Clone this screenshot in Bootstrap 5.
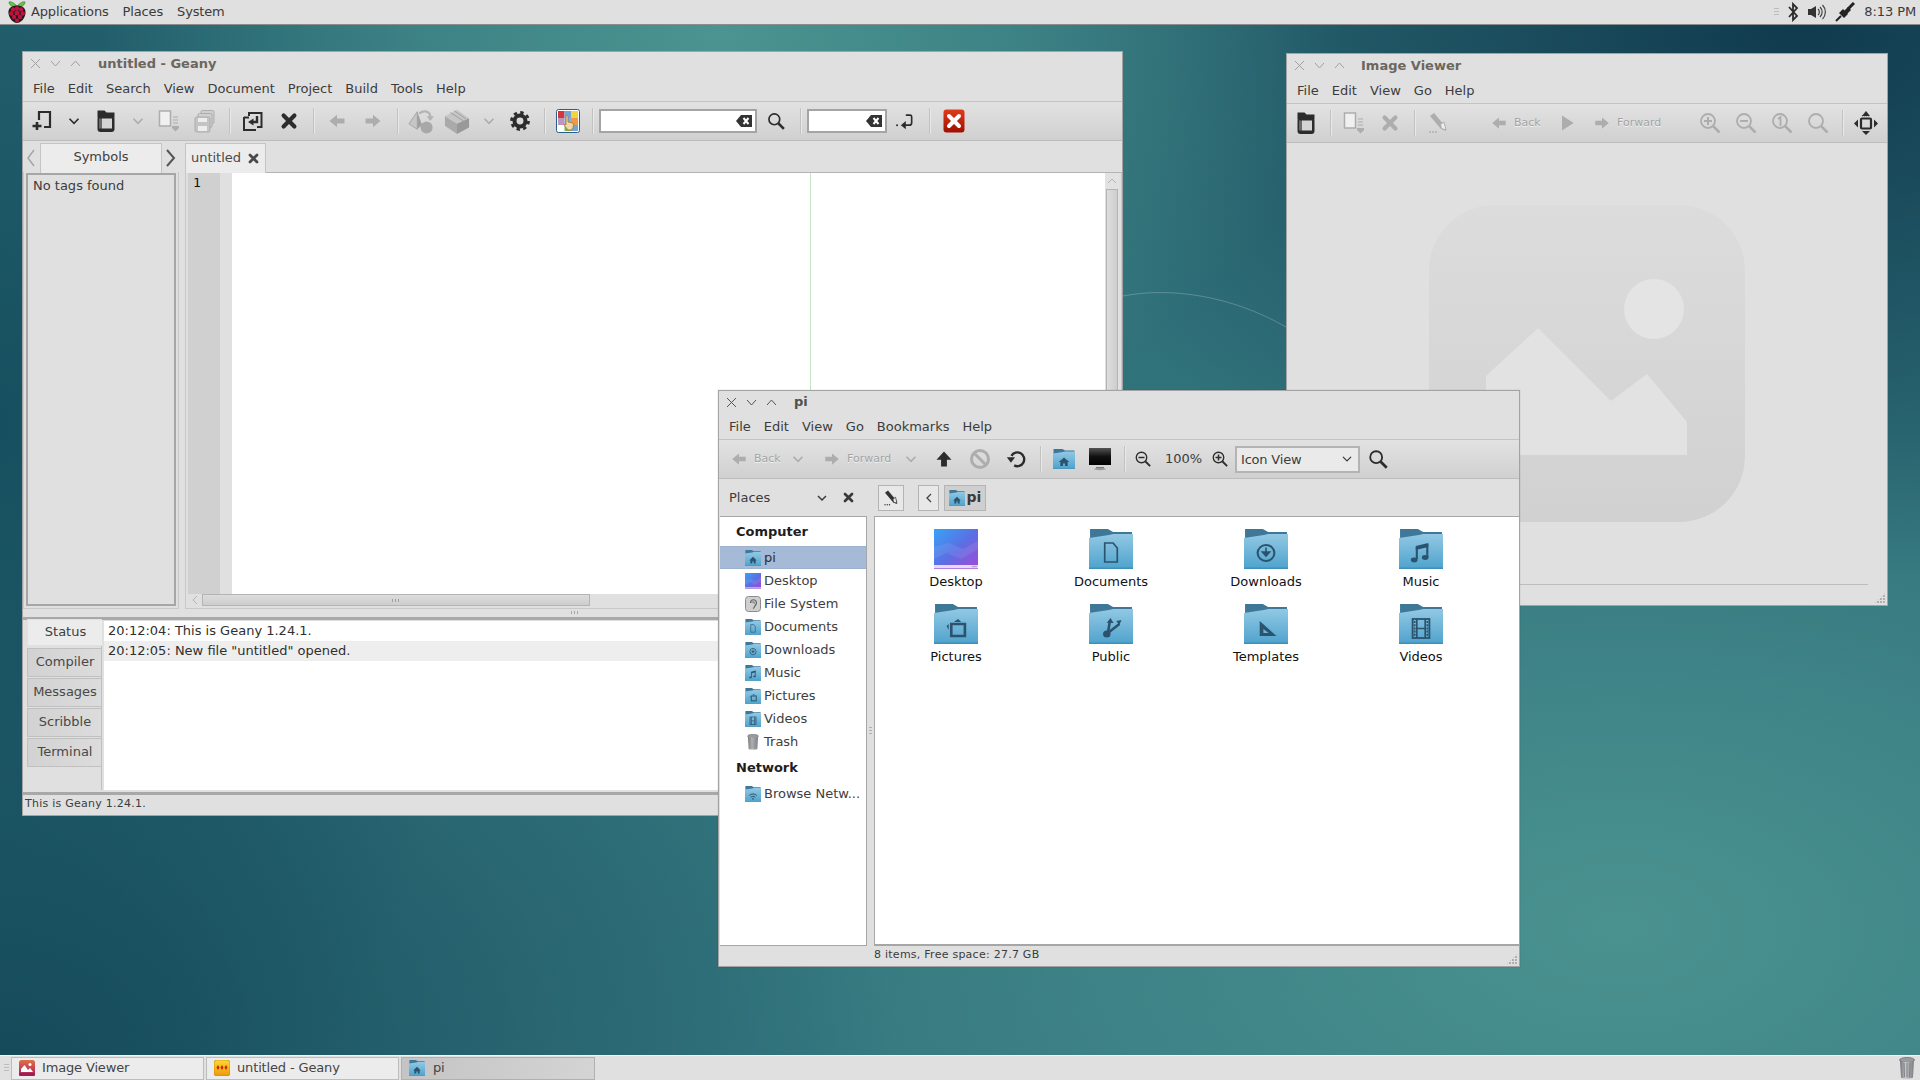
<!DOCTYPE html>
<html lang="en">
<head>
<meta charset="UTF-8">
<title>Desktop</title>
<link href="https://cdn.jsdelivr.net/npm/bootstrap@5.3.0/dist/css/bootstrap.min.css" rel="stylesheet">
<style>
body{width:1920px;height:1080px;overflow:hidden;font:13px/1.2 "DejaVu Sans",sans-serif;color:#3a3a3a;background:#2b6c76}
svg{display:block;flex:none}
.toppanel{height:25px;background:#e0e0e0;border-bottom:1px solid #8c8c8c;padding-left:7px}
.toppanel .logo{margin-right:4px}
.panelmenu{gap:14px;letter-spacing:-.15px}
.clock{margin:0 4px 0 9px;letter-spacing:-.1px}
.desk{position:relative;height:1030px;overflow:hidden;background:
 radial-gradient(ellipse 620px 420px at 720px 10px,#4b9491 0%,rgba(75,148,145,0) 100%),
 radial-gradient(ellipse 800px 560px at 1800px 0,#103a4e 0%,rgba(16,58,78,0) 100%),
 radial-gradient(ellipse 900px 560px at 0 1030px,#154a5b 0%,rgba(21,74,91,0) 100%),
 radial-gradient(ellipse 480px 900px at 0 400px,#164f5f 0%,rgba(22,79,95,0) 100%),
 radial-gradient(ellipse 900px 520px at 1620px 900px,#4a9290 0%,rgba(74,146,144,0) 100%),
 linear-gradient(#2e6f78,#357880)}
.arc{position:absolute;left:1100px;top:240px}
.win{position:absolute;background:#e0e0e0;border:1px solid #a3a3a3;display:flex;flex-direction:column}
.win-geany{left:22px;top:26px;width:1101px;height:765px}
.win-viewer{left:1286px;top:28px;width:602px;height:553px}
.win-files{left:718px;top:365px;width:802px;height:577px;box-shadow:0 0 0 1px rgba(0,0,0,.04)}
.titlerow{height:24px;padding:0 0 1px 2px;color:#6b675f;font-weight:700;flex:none}
.win-files .titlerow{color:#50504c;height:23px}
.wctl{width:20px;display:flex;justify-content:center;color:#a0a0a0}
.win-files .wctl{color:#555}
.titletext{margin-left:13px}
.win-viewer .titletext{margin-left:12px}
.menurow{height:26px;flex:none;padding:0 0 0 10px;gap:13px;border-bottom:1px solid #c4c4c4;color:#3c3c3c}
.toolrow{height:39px;flex:none;background:linear-gradient(#e2e2e2,#d0d0d0);border-bottom:1px solid #bcbcbc;padding-left:1px}
.tool{width:36px;height:36px;display:flex;align-items:center;justify-content:center;flex:none;color:#2c2c2c}
.tool.chev{width:27px}
.tool.chev.first{width:28px}
.tool.chev-sm{width:24px}
.tool.narrow{width:26px}
.tool.wide{width:37px}
.dim{color:#adadad}
.tsep{width:12px;height:26px;flex:none;display:flex;justify-content:center}
.tsep.plus{width:13px}
.tsep::before{content:"";width:1px;height:100%;background:#c2c2c2;box-shadow:1px 0 0 #e8e8e8}
.entry.form-control{width:158px;height:24px;min-height:0;margin-left:1px;padding:0;border:2px solid #a4a4a4;border-radius:0;background:#fff;flex:none}
.entrywrap{position:relative;flex:none}
.entrywrap .clear{position:absolute;right:5px;top:5px}
.w-entry2.form-control{width:80px}
.tlabel{font-size:11px;color:#a4a4a4;text-shadow:0 1px 0 #f2f2f2}
.tgroup{flex:none;gap:6px}
.tback{width:51px}
.tfwd{width:71px}
.gl-3{margin-left:3px}
.gl-5{margin-left:5px}
.gl-8{margin-left:8px}
.gl-10{margin-left:10px}
.gl-13{margin-left:13px}
.gl-28{margin-left:28px}
.gl-34{margin-left:34px}
.work{height:468px;flex:none}
.sidebook{width:158px;flex:none}
.strip{height:31px;flex:none;position:relative}
.tabhead{position:absolute;top:2px;height:30px;background:#ececec;border:1px solid #c4c4c4;border-bottom:none;display:flex;align-items:center;justify-content:center;color:#404040}
.tab-symbols{left:17px;width:122px;padding-bottom:4px}
.tab-untitled{left:0;width:81px;top:2px;height:30px;gap:6px;z-index:1;color:#4a4a4a;padding-bottom:1px}
.arrow-l{position:absolute;left:3px;top:7px;color:#a6a6a6}
.arrow-r{position:absolute;left:142px;top:7px;color:#555}
.sideframe{width:156px;height:437px;border:1px solid #c8c8c8;border-top:none;padding:1px 2px 2px}
.tagbox{height:100%;border:2px solid #a6a6a6;padding:3px 5px;color:#3c3c3c}
.vhandle{width:4px;flex:none;position:relative}
.editbook{width:937px;flex:none}
.editstrip{height:32px;position:relative;border-bottom:1px solid #b4b4b4}
.editframe{height:436px;border:1px solid #c8c8c8;border-top:none;padding:0 2px 2px 2px;display:flex;flex-direction:column}
.editmain{flex:1;min-height:0}
.gutter{width:32px;background:#d0d0d0;font:13px/17px "DejaVu Sans Mono",monospace;color:#111;padding:1px 0 0 5px;flex:none}
.fold{width:12px;background:#e0e0e0;flex:none}
.paper{flex:1;background:#fff;position:relative}
.paper::after{content:"";position:absolute;left:578px;top:0;bottom:0;width:1px;background:#c6e4c4}
.vbar{width:14px;flex:none;background:#e2e2e2;padding:0 1px}
.vbar .step{height:16px;display:flex;justify-content:center;align-items:center;color:#b4b4b4}
.vbar .thumb{height:388px;background:linear-gradient(90deg,#dedede,#cecece);border:1px solid #b4b4b4}
.hbar{height:12px;flex:none}
.hmargin{width:14px;flex:none;display:flex;align-items:center;padding-left:3px;color:#b4b4b4}
.hthumb{width:388px;height:12px;background:linear-gradient(#dcdcdc,#cecece);border:1px solid #b4b4b4;display:flex;align-items:center;justify-content:center}
.grip{width:8px;height:3px;background:repeating-linear-gradient(90deg,#a0a0a0 0 1px,transparent 1px 3px)}
.split{height:8px;flex:none;position:relative}
.split::after{content:"";position:absolute;left:548px;top:2px;width:8px;height:3px;background:repeating-linear-gradient(90deg,#a8a8a8 0 1px,transparent 1px 3px)}
.msgwin{height:178px;flex:none;border-top:3px solid #a8a8a8;border-bottom:3px solid #a8a8a8;padding-bottom:2px}
.msgtabs{width:79px;flex:none;padding-left:4px;border-right:1px solid #c0c0c0;position:relative}
.msgtab{height:29px;margin-bottom:1px;width:74px;padding:0 0 1px 1px;background:linear-gradient(90deg,#d2d2d2,#dcdcdc);border:1px solid #c0c0c0;border-right:none;display:flex;align-items:center;justify-content:center;color:#484848}
.msgtab.act{background:#ececec;width:75px;height:27px;margin:-1px 0 2px;position:relative;border-color:#e0e0e0;color:#404040}
.msgbody{margin-left:2px;flex:1;background:#fff;margin-top:1px}
.msgline{height:20px;padding-left:4px;display:flex;align-items:center;color:#303030}
.msgline.alt{background:#eeeeee}
.statusrow{height:20px;flex:none;padding:0 0 2px 2px;font-size:11px;color:#3c3c3c;letter-spacing:.25px}
.viewpane{flex:1;min-height:0}
.viewstat{height:21px;flex:none;position:relative}
.viewstat::before{content:"";position:absolute;left:0;right:19px;top:0;height:1px;background:#bcbcbc}
.grippy{position:absolute;right:1px;bottom:1px;width:12px;height:12px;background-image:radial-gradient(circle at 1px 1px,#b0b0b0 1px,transparent 1px);background-size:3px 3px;clip-path:polygon(100% 0,100% 100%,0 100%)}
.placerow{height:37px;flex:none;padding-left:10px}
.placename{width:80px;color:#3c3c3c}
.pathbtn.btn{height:26px;width:26px;padding:0;display:flex;align-items:center;justify-content:center;background:#e8e8e8;border:1px solid #b4b4b4;border-radius:0;color:#333;flex:none}
.pathbtn.back{width:21px;margin-left:14px}
.pathbtn.here{width:42px;margin-left:5px;background:#cfcfcf;gap:2px;font-weight:700;color:#3a3a3a;font-size:14px}
.tplaces{width:26px;display:flex;justify-content:center;flex:none}
.m-edit{margin-left:17px}
.fileswork{flex:1;min-height:0}
.sidepane{width:147px;flex:none;background:#fff;border:1px solid #a6a6a6;border-left:none;margin-left:1px}
.sidehead{height:26px;padding-left:16px;font-weight:700;color:#1e1e1e;display:flex;align-items:center}
.sidehead.first{height:29px}
.sidehead.net{height:29px}
.siderow{height:23px;padding-left:25px;gap:3px;color:#404040}
.siderow.sel{background:#a5bad6;border-top:1px solid #9cb2cf;border-bottom:1px solid #9cb2cf;color:#2c2c2c}
.midhandle{width:7px;flex:none;display:flex;align-items:center;justify-content:center}
.midgrip{width:3px;height:8px;background:repeating-linear-gradient(#b0b0b0 0 1px,transparent 1px 3px)}
.mainpane{flex:1;background:#fff;border-top:1px solid #a6a6a6;border-left:1px solid #a6a6a6;border-bottom:2px solid #a6a6a6;padding:12px 0 0 3.5px;display:grid;grid-template-columns:repeat(4,155px);grid-auto-rows:75px;align-content:start;color:#111}
.ficon{display:flex;flex-direction:column;align-items:center}
.ficon span{margin-top:5px;line-height:16px}
.filestat{height:20px;flex:none;position:relative;padding:0 0 2px 155px;font-size:11px;color:#3c3c3c;letter-spacing:.25px}
.viewselect.form-select{width:125px;height:27px;min-height:0;font:13px "DejaVu Sans",sans-serif;letter-spacing:-.2px;padding:0 0 0 4px;margin-left:2px;background-color:#eaeaea;background-position:right 5px center;background-size:12px 10px;border:2px solid #b4b4b4;border-radius:0;color:#3c3c3c;flex:none}
.pct{width:34px;margin:0 8px 0 9px;color:#3c3c3c;flex:none}
.taskbar{height:25px;background:#e0e0e0;border-top:1px solid #f4f4f4;padding:1px 5px 1px 4px}
.taskgrip{width:5px;height:9px;margin-right:2px;background:repeating-linear-gradient(#bcbcbc 0 1px,transparent 1px 3px)}
.taskbtn.btn{width:193px;height:23px;padding:0 0 0 7px;margin-right:2px;font-size:13px;letter-spacing:-.15px;gap:7px;background:#ececec;border:1px solid #bdbdbd;border-radius:0;color:#444;display:flex;align-items:center;text-align:left}
.taskbtn.on{background:linear-gradient(90deg,#c4c4c4,#d4d4d4);border-color:#b0b0b0;margin-right:0;width:194px;gap:8px}
</style>
</head>
<body>
<svg width="0" height="0" class="position-absolute">
 <defs>
  <linearGradient id="gFolder" x1="0" y1="0" x2="0" y2="1"><stop offset="0" stop-color="#92c8e4"/><stop offset="1" stop-color="#4fa3cd"/></linearGradient>
  <linearGradient id="gDesk" x1="0" y1="0" x2="1" y2="1"><stop offset="0" stop-color="#36a4f6"/><stop offset=".5" stop-color="#5a70e4"/><stop offset="1" stop-color="#a447d6"/></linearGradient>
  <linearGradient id="gMon" x1="0" y1="0" x2="0" y2="1"><stop offset="0" stop-color="#555"/><stop offset=".5" stop-color="#111"/><stop offset="1" stop-color="#000"/></linearGradient>
  <linearGradient id="gRed" x1="0" y1="0" x2="0" y2="1"><stop offset="0" stop-color="#e23a1c"/><stop offset="1" stop-color="#9e0f00"/></linearGradient>
  <linearGradient id="gImg" x1="0" y1="0" x2="0" y2="1"><stop offset="0" stop-color="#e0704a"/><stop offset="1" stop-color="#a81f5c"/></linearGradient>
  <linearGradient id="gGeany" x1="0" y1="0" x2="0" y2="1"><stop offset="0" stop-color="#ffd92c"/><stop offset="1" stop-color="#eb9a0c"/></linearGradient>
  <linearGradient id="gTrash" x1="0" y1="0" x2="1" y2="0"><stop offset="0" stop-color="#6f7275"/><stop offset=".4" stop-color="#c4c6c8"/><stop offset="1" stop-color="#7a7c80"/></linearGradient>
  <linearGradient id="gPh" x1="0" y1="0" x2="0" y2="1"><stop offset="0" stop-color="#dcdcdc"/><stop offset="1" stop-color="#d1d1d1"/></linearGradient>

  <symbol id="folder" viewBox="0 0 42 40" preserveAspectRatio="none">
   <path d="M1 0h17l5 3h18v9H1z" fill="#3f7799"/>
   <path d="M0 9l19-3 4-1h19v34.500H0z" fill="url(#gFolder)"/>
   <path d="M0 38.500h42V40H0z" fill="#3f8fbb"/>
  </symbol>
  <symbol id="f-doc" viewBox="0 0 42 40" preserveAspectRatio="none"><use href="#folder"/><path d="M15 14h8l4 5v14H15z" fill="none" stroke="#2c536d" stroke-width="1.600"/></symbol>
  <symbol id="f-down" viewBox="0 0 42 40" preserveAspectRatio="none"><use href="#folder"/><circle cx="21" cy="24" r="8" fill="none" stroke="#2c536d" stroke-width="2"/><path d="M21 18.500v7M17.500 23l3.500 4 3.500-4z" fill="#2c536d" stroke="#2c536d" stroke-width="1.500"/></symbol>
  <symbol id="f-music" viewBox="0 0 42 40" preserveAspectRatio="none"><use href="#folder"/><path d="M27 15v13" fill="none" stroke="#2c536d" stroke-width="2"/><path d="M17 18v12" stroke="#2c536d" stroke-width="2"/><ellipse cx="14.500" cy="31" rx="3.200" ry="2.400" fill="#2c536d"/><ellipse cx="25" cy="28.500" rx="3.200" ry="2.400" fill="#2c536d"/><path d="M16 17l12-3v4l-12 3z" fill="#2c536d"/></symbol>
  <symbol id="f-pic" viewBox="0 0 42 40" preserveAspectRatio="none"><use href="#folder"/><rect x="16.500" y="20" width="13" height="12" fill="none" stroke="#2c536d" stroke-width="2.500"/><path d="M19 18l4-3 3 3zM12 22l2-2v6z" fill="#2c536d"/></symbol>
  <symbol id="f-pub" viewBox="0 0 42 40" preserveAspectRatio="none"><use href="#folder"/><circle cx="17" cy="30" r="3.600" fill="#2c536d"/><path d="M18 29l2-12M18 29l11-9" stroke="#2c536d" stroke-width="2.400"/><path d="M17 19l3.500-5 3 5zM26 17l5-1-2 5z" fill="#2c536d"/></symbol>
  <symbol id="f-tpl" viewBox="0 0 42 40" preserveAspectRatio="none"><use href="#folder"/><path d="M15 17v15h16z" fill="#2c536d"/><path d="M18.500 25v4h5z" fill="#6fb3d6"/></symbol>
  <symbol id="f-vid" viewBox="0 0 42 40" preserveAspectRatio="none"><use href="#folder"/><rect x="13" y="15" width="16" height="19" fill="none" stroke="#2c536d" stroke-width="1.800"/><path d="M17 15v19M25 15v19M17 24.500h8" stroke="#2c536d" stroke-width="1.600"/><path d="M15 17v15M27 17v15" stroke="#2c536d" stroke-width="1.600" stroke-dasharray="2 1.200"/></symbol>
  <symbol id="f-home" viewBox="0 0 42 40" preserveAspectRatio="none"><use href="#folder"/><path d="M21 17l10 9h-3v8h-5v-5h-4v5h-5v-8h-3z" fill="#2c536d"/></symbol>
  <symbol id="f-net" viewBox="0 0 42 40" preserveAspectRatio="none"><use href="#folder"/><path d="M11 24a14 14 0 0 1 20 0M15 28a9 9 0 0 1 12 0" fill="none" stroke="#2c536d" stroke-width="2.500"/><circle cx="21" cy="32" r="2.200" fill="#2c536d"/></symbol>
  <symbol id="deskicon" viewBox="0 0 42 40" preserveAspectRatio="none">
   <rect width="42" height="40" fill="url(#gDesk)"/>
   <path d="M0 18l14-4 14 6 14-8v8L26 30 12 24 0 30z" fill="#fff" opacity=".08"/>
   <rect y="36" width="42" height="3" fill="#ead8f6"/><rect x="36" y="36.800" width="5" height="1.500" fill="#b9a6c8"/><rect y="39" width="42" height="1" fill="#b07ee0"/>
  </symbol>
  <symbol id="fsicon" viewBox="0 0 16 16"><rect x=".5" y=".5" width="15" height="15" rx="3" fill="#cfcfcf" stroke="#8c8c8c"/><path d="M5.500 7a3 3 0 1 1 5 2c-1 1-1 3-2.500 3.500" fill="none" stroke="#666" stroke-width="1.200"/><path d="M7 7a1.200 1.200 0 1 1 2 .8" fill="none" stroke="#666"/></symbol>
  <symbol id="trash" viewBox="0 0 16 22"><ellipse cx="8" cy="3" rx="7.500" ry="2.500" fill="#9a9da0" stroke="#6f7275" stroke-width=".8"/><path d="M1 3.500l1 17c1 1.500 11 1.500 12 0l1-17c-2 2-12 2-14 0z" fill="url(#gTrash)"/><path d="M5 6l.5 14M11 6l-.5 14M8 6v14" stroke="#77797c" stroke-width=".8"/></symbol>

  <symbol id="i-new" viewBox="0 0 24 24"><path d="M9 11V3h11v15h-6" fill="none" stroke="currentColor" stroke-width="2.200"/><path d="M7 13v8M2.500 17h9" stroke="currentColor" stroke-width="2.600"/></symbol>
  <symbol id="i-open" viewBox="0 0 24 24"><path d="M3.500 1.500h7l2 2h8v5h-17z" fill="currentColor"/><rect x="3.500" y="7" width="17" height="16" rx="3" fill="currentColor"/><rect x="8" y="9.500" width="10" height="10" fill="#d4d4d4"/><rect x="5" y="9.500" width="3" height="10" fill="#6a6a6a"/></symbol>
  <symbol id="i-saveas" viewBox="0 0 24 24"><rect x="2.500" y="2" width="11" height="15" fill="#f0f0f0" stroke="currentColor" stroke-width="1.500"/><path d="M16 8h5M16 11h5M16 14h5" stroke="currentColor"/><path d="M15 17h7v2l-3.500 3.500L15 19z" fill="currentColor"/></symbol>
  <symbol id="i-saveall" viewBox="0 0 24 24"><rect x="8" y="1.500" width="13" height="13" rx="1.500" fill="#cfcfcf" stroke="currentColor"/><rect x="5" y="4.500" width="14" height="14" rx="1.500" fill="#cfcfcf" stroke="currentColor"/><rect x="2" y="8" width="15" height="15" rx="1.500" fill="#c4c4c4" stroke="currentColor"/><rect x="5" y="17" width="9" height="5" fill="#ededed"/><rect x="5" y="9" width="9" height="4" fill="#ededed"/></symbol>
  <symbol id="i-reload" viewBox="0 0 24 24"><path d="M8 7V4h12.500v14H16" fill="none" stroke="currentColor" stroke-width="2"/><path d="M3 8.500h5M3 8v13h12" fill="none" stroke="currentColor" stroke-width="2"/><path d="M16 7v6h-5" fill="none" stroke="currentColor" stroke-width="2.400"/><path d="M12.500 9.500L7 13l5.500 3.500z" fill="currentColor"/></symbol>
  <symbol id="i-x" viewBox="0 0 24 24"><path d="M5.500 5.500l13 13M18.500 5.500l-13 13" stroke="currentColor" stroke-width="5" stroke-linecap="round"/></symbol>
  <symbol id="i-left" viewBox="0 0 24 24"><path d="M3 12l9-7.500V9h9v6h-9v4.500z" fill="currentColor"/></symbol>
  <symbol id="i-right" viewBox="0 0 24 24"><path d="M21 12l-9-7.500V9H3v6h9v4.500z" fill="currentColor"/></symbol>
  <symbol id="i-up" viewBox="0 0 24 24"><path d="M12 3l9 10h-5.500v8h-7v-8H3z" fill="currentColor"/></symbol>
  <symbol id="i-play" viewBox="0 0 24 24"><path d="M6 3l14 9-14 9z" fill="currentColor"/></symbol>
  <symbol id="i-chev" viewBox="0 0 24 24"><path d="M6 9l6 6 6-6" fill="none" stroke="currentColor" stroke-width="2.200"/></symbol>
  <symbol id="i-compile" viewBox="0 0 28 28"><path d="M10 4L1 17l9 6z" fill="#c6c6c6" stroke="#a4a4a4"/><path d="M10 4l5 14-5 5z" fill="#9e9e9e"/><circle cx="20" cy="21" r="6.500" fill="#a8a8a8"/><path d="M12 6c5-4 12-3 12 4" fill="none" stroke="#b4b4b4" stroke-width="2.400"/><path d="M20 9l4 5 4-5z" fill="#b4b4b4"/></symbol>
  <symbol id="i-brick" viewBox="0 0 28 28"><path d="M1 9l13-7 13 9-13 6z" fill="#c6c6c6"/><path d="M1 9v10l13 9V17z" fill="#aaa"/><path d="M14 17v11l13-7V11z" fill="#999"/><path d="M7 5l14 9M11 3l13 9" stroke="#9a9a9a"/></symbol>
  <symbol id="i-gear" viewBox="0 0 24 24"><circle cx="12" cy="12" r="6" fill="none" stroke="currentColor" stroke-width="4.400"/><circle cx="12" cy="12" r="9.300" fill="none" stroke="currentColor" stroke-width="3" stroke-dasharray="3.700 3.600"/></symbol>
  <symbol id="i-color" viewBox="0 0 24 24"><rect x=".5" y=".5" width="23" height="23" rx="2" fill="#fff" stroke="#2a5d8f"/><rect x="2" y="2" width="6.500" height="7" fill="#d8343c"/><rect x="8.500" y="2" width="6.500" height="7" fill="#6fa6d8"/><rect x="15" y="2" width="7" height="7" fill="#f2d340"/><rect x="2" y="9" width="6.500" height="7" fill="#bd97bd"/><rect x="8.500" y="9" width="6.500" height="7" fill="#7fb0d8"/><rect x="15" y="9" width="7" height="7" fill="#ee9a44"/><rect x="8.500" y="16" width="6.500" height="6" fill="#74b848"/><rect x="15" y="16" width="7" height="6" fill="#6fa6d8"/><path d="M10 8c0-2 2-2 2 0v5l5 1c1 3 0 6-2 7h-3l-4-5c0-1 1-1 2 0z" fill="#f2d6a8" stroke="#a8692a" stroke-width=".7"/></symbol>
  <symbol id="i-clear" viewBox="0 0 16 14"><path d="M0 7l5-6h11v12H5z" fill="#333"/><path d="M7.500 4l5 6M12.500 4l-5 6" stroke="#fff" stroke-width="2"/></symbol>
  <symbol id="i-find" viewBox="0 0 24 24"><circle cx="10" cy="10" r="6.500" fill="none" stroke="currentColor" stroke-width="2"/><path d="M15 15l6.500 6.500" stroke="currentColor" stroke-width="3"/></symbol>
  <symbol id="i-jump" viewBox="0 0 24 24"><path d="M13 5h5c2 0 2 1 2 3v6c0 2-1 3-3 3h-5" fill="none" stroke="currentColor" stroke-width="2"/><path d="M13 12l-6 5 6 5z" fill="currentColor"/><circle cx="2.500" cy="17" r="1.200" fill="currentColor"/></symbol>
  <symbol id="i-redx" viewBox="0 0 22 24"><rect x=".5" y=".5" width="21" height="23" rx="3" fill="url(#gRed)"/><path d="M6 7l10 10M16 7L6 17" stroke="#fff" stroke-width="4" stroke-linecap="round"/></symbol>
  <symbol id="i-pencil" viewBox="0 0 24 24"><path d="M4 5l4-3 11 13 1 5-5-2z" fill="currentColor"/><path d="M14.500 13.500l3.500-2.500 2 8-4.500-1.500z" fill="#eee" stroke="currentColor"/><circle cx="4" cy="21" r=".9" fill="currentColor"/><circle cx="7" cy="21" r=".9" fill="currentColor"/><circle cx="10" cy="21" r=".9" fill="currentColor"/></symbol>
  <symbol id="i-zin" viewBox="0 0 24 24"><circle cx="10" cy="10" r="7" fill="none" stroke="currentColor" stroke-width="1.800"/><path d="M6 10h8M10 6v8" stroke="currentColor" stroke-width="2"/><path d="M15 15l6.500 6.500" stroke="currentColor" stroke-width="2.500"/></symbol>
  <symbol id="i-zout" viewBox="0 0 24 24"><circle cx="10" cy="10" r="7" fill="none" stroke="currentColor" stroke-width="1.800"/><path d="M6 10h8" stroke="currentColor" stroke-width="2"/><path d="M15 15l6.500 6.500" stroke="currentColor" stroke-width="2.500"/></symbol>
  <symbol id="i-z1" viewBox="0 0 24 24"><circle cx="10" cy="10" r="7" fill="none" stroke="currentColor" stroke-width="1.800"/><path d="M8 8l2.500-2v9" fill="none" stroke="currentColor" stroke-width="1.800"/><path d="M15 15l6.500 6.500" stroke="currentColor" stroke-width="2.500"/></symbol>
  <symbol id="i-zfit" viewBox="0 0 24 24"><circle cx="10" cy="10" r="7" fill="none" stroke="currentColor" stroke-width="1.800"/><path d="M15 15l6.500 6.500" stroke="currentColor" stroke-width="2.500"/></symbol>
  <symbol id="i-full" viewBox="0 0 24 24"><rect x="7" y="7.500" width="10" height="10" rx="1" fill="none" stroke="currentColor" stroke-width="2.200"/><path d="M12 0l4 5H8zM12 24l-4-4h8zM0 12.500l4-4v8zM24 12.500l-4-4v8z" fill="currentColor"/><path d="M8 4.800h8" stroke="currentColor" stroke-dasharray="1 1"/></symbol>
  <symbol id="i-stop" viewBox="0 0 24 24"><circle cx="12" cy="12" r="8.500" fill="none" stroke="currentColor" stroke-width="3"/><path d="M6.500 6.500l11 11" stroke="currentColor" stroke-width="3"/></symbol>
  <symbol id="i-undo" viewBox="0 0 24 24"><path d="M7 8.500a7.500 7.500 0 1 1 3 10.500" fill="none" stroke="currentColor" stroke-width="2.600"/><path d="M2 10h9l-4.500 6z" fill="currentColor"/></symbol>
  <symbol id="i-mon" viewBox="0 0 24 24"><rect x="1" y="1" width="22" height="17" fill="url(#gMon)"/><path d="M8 20h8v1H8z" fill="#777"/><ellipse cx="12" cy="22" rx="6" ry="1.200" fill="#999"/></symbol>
  <symbol id="i-bt" viewBox="0 0 12 20"><path d="M2 5l8 9-4 4V2l4 4-8 9" fill="none" stroke="#2c2c2c" stroke-width="1.800"/></symbol>
  <symbol id="i-vol" viewBox="0 0 20 20"><path d="M1 7h3l5-3v12l-5-3H1z" fill="#333"/><path d="M11 7a4 4 0 0 1 0 6M13 5a7 7 0 0 1 0 10M15.500 3a10 10 0 0 1 0 14" fill="none" stroke="#444" stroke-width="1.200"/></symbol>
  <symbol id="i-cable" viewBox="0 0 20 20"><path d="M1 19l5-5" stroke="#222" stroke-width="2"/><path d="M4 11l5 5 4-4-5-5z" fill="#222"/><path d="M9 9l4-4 3 3-4 4z" fill="#222"/><path d="M13 7l6-6" stroke="#222" stroke-width="3"/></symbol>
  <symbol id="i-rasp" viewBox="0 0 20 24">
   <path d="M10 6C7 3 4 1 2 2c0 3 3 5 7 5zM10 6c3-3 6-5 8-4 0 3-3 5-7 5z" fill="#6cc04a" stroke="#2f7a22" stroke-width=".6"/>
   <path d="M10 5.500c-7 0-9 4-8.500 8 .5 5 5 9.500 8.500 9.500s8-4.500 8.500-9.500c.5-4-1.500-8-8.500-8z" fill="#1d1d1d"/>
   <g fill="#c0123f"><circle cx="6" cy="9.500" r="2.200"/><circle cx="10" cy="8.500" r="2.200"/><circle cx="14" cy="9.500" r="2.200"/><circle cx="4.300" cy="13.500" r="2.200"/><circle cx="10" cy="13" r="2.500"/><circle cx="15.700" cy="13.500" r="2.200"/><circle cx="7" cy="17" r="2.200"/><circle cx="13" cy="17" r="2.200"/><circle cx="10" cy="20.500" r="2"/></g>
  </symbol>
  <symbol id="i-imgapp" viewBox="0 0 16 16"><rect width="16" height="16" rx="2.500" fill="url(#gImg)"/><path d="M2 12V9l3.500-4L9 10l2-2 3 4z" fill="#fff"/><circle cx="11" cy="4.500" r="1.500" fill="#fff"/><rect y="13" width="16" height="3" rx="1.200" fill="#a01c5c"/></symbol>
  <symbol id="i-geany" viewBox="0 0 16 16"><rect width="16" height="16" rx="3" fill="url(#gGeany)" stroke="#c47c08" stroke-width=".6"/><path d="M4 5l1.500 2.500L4 10 2.500 7.500zM8 5l1.500 2.500L8 10 6.500 7.500zM12 5l1.500 2.500L12 10l-1.500-2.500z" fill="#d41f12"/></symbol>
 </defs>
</svg>

<div class="toppanel d-flex align-items-center">
 <svg class="logo" width="20" height="24"><use href="#i-rasp"/></svg>
 <div class="panelmenu d-flex"><span>Applications</span><span>Places</span><span>System</span></div>
 <div class="ms-auto d-flex align-items-center">
  <span class="taskgrip m-0 me-2"></span>
  <svg class="me-2" width="12" height="20"><use href="#i-bt"/></svg>
  <svg class="me-2" width="20" height="20"><use href="#i-vol"/></svg>
  <svg width="20" height="20"><use href="#i-cable"/></svg>
  <span class="clock">8:13 PM</span>
 </div>
</div>

<div class="desk">
 <svg class="arc" width="200" height="100"><path d="M23 31C70 22 130 30 186 62" fill="none" stroke="#fff" stroke-opacity=".22"/></svg>

 <section class="win win-viewer">
  <div class="titlerow d-flex align-items-center">
   <span class="wctl"><svg width="11" height="11"><path d="M1 1l9 9M10 1l-9 9" stroke="currentColor"/></svg></span>
   <span class="wctl"><svg width="11" height="11"><path d="M1 3l4.500 5L10 3" fill="none" stroke="currentColor"/></svg></span>
   <span class="wctl"><svg width="11" height="11"><path d="M1 8l4.500-5L10 8" fill="none" stroke="currentColor"/></svg></span>
   <span class="titletext">Image Viewer</span>
  </div>
  <div class="menurow d-flex align-items-center"><span>File</span><span>Edit</span><span>View</span><span>Go</span><span>Help</span></div>
  <div class="toolrow d-flex align-items-center">
   <span class="tool"><svg width="24" height="24"><use href="#i-open"/></svg></span>
   <span class="tsep"></span>
   <span class="tool dim"><svg width="24" height="24"><use href="#i-saveas"/></svg></span>
   <span class="tool dim"><svg width="20" height="20"><use href="#i-x"/></svg></span>
   <span class="tsep"></span>
   <span class="tool dim"><svg width="24" height="24"><use href="#i-pencil"/></svg></span>
   <div class="tgroup tback gl-34 d-flex align-items-center dim"><svg width="18" height="18"><use href="#i-left"/></svg><span class="tlabel">Back</span></div>
   <span class="tool dim ms-2"><svg width="20" height="20"><use href="#i-play"/></svg></span>
   <div class="tgroup tfwd gl-8 d-flex align-items-center dim"><svg width="18" height="18"><use href="#i-right"/></svg><span class="tlabel">Forward</span></div>
   <span class="tool dim gl-28"><svg width="24" height="24"><use href="#i-zin"/></svg></span>
   <span class="tool dim"><svg width="24" height="24"><use href="#i-zout"/></svg></span>
   <span class="tool dim"><svg width="24" height="24"><use href="#i-z1"/></svg></span>
   <span class="tool dim"><svg width="24" height="24"><use href="#i-zfit"/></svg></span>
   <span class="tsep"></span>
   <span class="tool"><svg width="24" height="24"><use href="#i-full"/></svg></span>
  </div>
  <div class="viewpane d-flex align-items-center justify-content-center">
   <svg width="316" height="317" viewBox="0 0 316 317">
    <rect width="316" height="317" rx="66" fill="url(#gPh)"/>
    <ellipse cx="225" cy="104" rx="30" ry="30" fill="#e4e4e4"/>
    <path d="M109 123L57 171v79h201v-33l-40-48-36 27z" fill="#e2e2e2"/>
   </svg>
  </div>
  <div class="viewstat"><span class="grippy"></span></div>
 </section>

 <section class="win win-geany">
  <div class="titlerow d-flex align-items-center">
   <span class="wctl"><svg width="11" height="11"><path d="M1 1l9 9M10 1l-9 9" stroke="currentColor"/></svg></span>
   <span class="wctl"><svg width="11" height="11"><path d="M1 3l4.500 5L10 3" fill="none" stroke="currentColor"/></svg></span>
   <span class="wctl"><svg width="11" height="11"><path d="M1 8l4.500-5L10 8" fill="none" stroke="currentColor"/></svg></span>
   <span class="titletext">untitled - Geany</span>
  </div>
  <div class="menurow d-flex align-items-center"><span>File</span><span>Edit</span><span>Search</span><span>View</span><span>Document</span><span>Project</span><span>Build</span><span>Tools</span><span>Help</span></div>
  <div class="toolrow d-flex align-items-center">
   <span class="tool"><svg width="24" height="24"><use href="#i-new"/></svg></span>
   <span class="tool chev first"><svg width="18" height="18"><use href="#i-chev"/></svg></span>
   <span class="tool"><svg width="24" height="24"><use href="#i-open"/></svg></span>
   <span class="tool chev dim"><svg width="18" height="18"><use href="#i-chev"/></svg></span>
   <span class="tool dim"><svg width="24" height="24"><use href="#i-saveas"/></svg></span>
   <span class="tool dim"><svg width="24" height="24"><use href="#i-saveall"/></svg></span>
   <span class="tsep"></span>
   <span class="tool"><svg width="24" height="24"><use href="#i-reload"/></svg></span>
   <span class="tool"><svg width="20" height="20"><use href="#i-x"/></svg></span>
   <span class="tsep"></span>
   <span class="tool dim"><svg width="20" height="20"><use href="#i-left"/></svg></span>
   <span class="tool dim"><svg width="20" height="20"><use href="#i-right"/></svg></span>
   <span class="tsep"></span>
   <span class="tool"><svg width="26" height="26"><use href="#i-compile"/></svg></span>
   <span class="tool"><svg width="26" height="26"><use href="#i-brick"/></svg></span>
   <span class="tool chev dim"><svg width="18" height="18"><use href="#i-chev"/></svg></span>
   <span class="tool"><svg width="22" height="22"><use href="#i-gear"/></svg></span>
   <span class="tsep"></span>
   <span class="tool"><svg width="24" height="24"><use href="#i-color"/></svg></span>
   <span class="tsep"></span>
   <span class="entrywrap"><input class="entry form-control" type="text"><svg class="clear" width="16" height="14"><use href="#i-clear"/></svg></span>
   <span class="tool wide"><svg width="20" height="20"><use href="#i-find"/></svg></span>
   <span class="tsep"></span>
   <span class="entrywrap"><input class="entry w-entry2 form-control" type="text"><svg class="clear" width="16" height="14"><use href="#i-clear"/></svg></span>
   <span class="tool"><svg width="20" height="20"><use href="#i-jump"/></svg></span>
   <span class="tsep plus"></span>
   <span class="tool"><svg width="22" height="24"><use href="#i-redx"/></svg></span>
  </div>
  <div class="work d-flex">
   <div class="sidebook">
    <div class="strip">
     <svg class="arrow-l" width="10" height="20"><path d="M8 2L2 10l6 8" fill="none" stroke="currentColor" stroke-width="1.500"/></svg>
     <span class="tabhead tab-symbols">Symbols</span>
     <svg class="arrow-r" width="12" height="20"><path d="M2 2l7 8-7 8" fill="none" stroke="currentColor" stroke-width="2"/></svg>
    </div>
    <div class="sideframe"><div class="tagbox">No tags found</div></div>
   </div>
   <div class="vhandle"></div>
   <div class="editbook">
    <div class="editstrip"><span class="tabhead tab-untitled">untitled <svg width="13" height="13"><use href="#i-x"/></svg></span></div>
    <div class="editframe">
     <div class="editmain d-flex">
      <div class="gutter">1</div>
      <div class="fold"></div>
      <div class="paper"></div>
      <div class="vbar">
       <div class="step"><svg width="10" height="8"><path d="M1 6l4-4 4 4" fill="none" stroke="currentColor"/></svg></div>
       <div class="thumb"></div>
      </div>
     </div>
     <div class="hbar d-flex position-relative">
      <div class="hmargin"><svg width="8" height="10"><path d="M6 1L2 5l4 4" fill="none" stroke="currentColor"/></svg></div>
      <div class="hthumb position-relative"><span class="grip"></span></div>
     </div>
    </div>
   </div>
  </div>
  <div class="split"></div>
  <div class="msgwin d-flex">
   <div class="msgtabs">
    <div class="msgtab act">Status</div>
    <div class="msgtab">Compiler</div>
    <div class="msgtab">Messages</div>
    <div class="msgtab">Scribble</div>
    <div class="msgtab">Terminal</div>
   </div>
   <div class="msgbody">
    <div class="msgline">20:12:04: This is Geany 1.24.1.</div>
    <div class="msgline alt">20:12:05: New file "untitled" opened.</div>
   </div>
  </div>
  <div class="statusrow d-flex align-items-center">This is Geany 1.24.1.</div>
 </section>

 <section class="win win-files">
  <div class="titlerow d-flex align-items-center">
   <span class="wctl"><svg width="11" height="11"><path d="M1 1l9 9M10 1l-9 9" stroke="currentColor"/></svg></span>
   <span class="wctl"><svg width="11" height="11"><path d="M1 3l4.500 5L10 3" fill="none" stroke="currentColor"/></svg></span>
   <span class="wctl"><svg width="11" height="11"><path d="M1 8l4.500-5L10 8" fill="none" stroke="currentColor"/></svg></span>
   <span class="titletext">pi</span>
  </div>
  <div class="menurow d-flex align-items-center"><span>File</span><span>Edit</span><span>View</span><span>Go</span><span>Bookmarks</span><span>Help</span></div>
  <div class="toolrow d-flex align-items-center">
   <div class="tgroup tback gl-10 d-flex align-items-center dim"><svg width="18" height="18"><use href="#i-left"/></svg><span class="tlabel">Back</span></div>
   <span class="tool chev-sm dim gl-5"><svg width="18" height="18"><use href="#i-chev"/></svg></span>
   <div class="tgroup tfwd gl-13 d-flex align-items-center dim"><svg width="18" height="18"><use href="#i-right"/></svg><span class="tlabel">Forward</span></div>
   <span class="tool chev-sm dim gl-5"><svg width="18" height="18"><use href="#i-chev"/></svg></span>
   <span class="tool gl-3"><svg width="20" height="20"><use href="#i-up"/></svg></span>
   <span class="tool dim"><svg width="24" height="24"><use href="#i-stop"/></svg></span>
   <span class="tool"><svg width="22" height="22"><use href="#i-undo"/></svg></span>
   <span class="tsep"></span>
   <span class="tool"><svg width="22" height="20"><use href="#f-home"/></svg></span>
   <span class="tool"><svg width="24" height="24"><use href="#i-mon"/></svg></span>
   <span class="tsep"></span>
   <span class="tool narrow"><svg width="18" height="18"><use href="#i-zout"/></svg></span>
   <span class="pct">100%</span>
   <span class="tool narrow"><svg width="18" height="18"><use href="#i-zin"/></svg></span>
   <select class="viewselect form-select"><option>Icon View</option></select>
   <span class="tool"><svg width="22" height="22"><use href="#i-find"/></svg></span>
  </div>
  <div class="placerow d-flex align-items-center">
   <span class="placename">Places</span>
   <span class="tplaces"><svg width="16" height="16"><use href="#i-chev"/></svg></span>
   <span class="tplaces"><svg width="13" height="13"><use href="#i-x"/></svg></span>
   <button class="pathbtn btn m-edit" type="button"><svg width="18" height="18"><use href="#i-pencil"/></svg></button>
   <button class="pathbtn back btn" type="button"><svg width="8" height="10"><path d="M6 1L2 5l4 4" fill="none" stroke="#444" stroke-width="1.300"/></svg></button>
   <button class="pathbtn here btn" type="button"><svg width="16" height="16"><use href="#f-home"/></svg>pi</button>
  </div>
  <div class="fileswork d-flex">
   <div class="sidepane">
    <div class="sidehead first">Computer</div>
    <div class="siderow sel d-flex align-items-center"><svg width="16" height="16"><use href="#f-home"/></svg>pi</div>
    <div class="siderow d-flex align-items-center"><svg width="16" height="16"><use href="#deskicon"/></svg>Desktop</div>
    <div class="siderow d-flex align-items-center"><svg width="16" height="16"><use href="#fsicon"/></svg>File System</div>
    <div class="siderow d-flex align-items-center"><svg width="16" height="16"><use href="#f-doc"/></svg>Documents</div>
    <div class="siderow d-flex align-items-center"><svg width="16" height="16"><use href="#f-down"/></svg>Downloads</div>
    <div class="siderow d-flex align-items-center"><svg width="16" height="16"><use href="#f-music"/></svg>Music</div>
    <div class="siderow d-flex align-items-center"><svg width="16" height="16"><use href="#f-pic"/></svg>Pictures</div>
    <div class="siderow d-flex align-items-center"><svg width="16" height="16"><use href="#f-vid"/></svg>Videos</div>
    <div class="siderow d-flex align-items-center"><svg width="16" height="16"><use href="#trash"/></svg>Trash</div>
    <div class="sidehead net">Network</div>
    <div class="siderow d-flex align-items-center"><svg width="16" height="16"><use href="#f-net"/></svg>Browse Netw...</div>
   </div>
   <div class="midhandle"><span class="midgrip"></span></div>
   <div class="mainpane">
    <div class="ficon"><svg width="44" height="40"><use href="#deskicon"/></svg><span>Desktop</span></div>
    <div class="ficon"><svg width="44" height="40"><use href="#f-doc"/></svg><span>Documents</span></div>
    <div class="ficon"><svg width="44" height="40"><use href="#f-down"/></svg><span>Downloads</span></div>
    <div class="ficon"><svg width="44" height="40"><use href="#f-music"/></svg><span>Music</span></div>
    <div class="ficon"><svg width="44" height="40"><use href="#f-pic"/></svg><span>Pictures</span></div>
    <div class="ficon"><svg width="44" height="40"><use href="#f-pub"/></svg><span>Public</span></div>
    <div class="ficon"><svg width="44" height="40"><use href="#f-tpl"/></svg><span>Templates</span></div>
    <div class="ficon"><svg width="44" height="40"><use href="#f-vid"/></svg><span>Videos</span></div>
   </div>
  </div>
  <div class="filestat d-flex align-items-center">8 items, Free space: 27.7 GB<span class="grippy"></span></div>
 </section>
</div>

<div class="taskbar d-flex align-items-center">
 <span class="taskgrip"></span>
 <button class="taskbtn btn" type="button"><svg width="16" height="16"><use href="#i-imgapp"/></svg>Image Viewer</button>
 <button class="taskbtn btn" type="button"><svg width="16" height="16"><use href="#i-geany"/></svg>untitled - Geany</button>
 <button class="taskbtn on btn" type="button"><svg width="16" height="16"><use href="#f-home"/></svg>pi</button>
 <svg class="ms-auto" width="16" height="22"><use href="#trash"/></svg>
</div>
<script src="https://cdn.jsdelivr.net/npm/bootstrap@5.3.0/dist/js/bootstrap.bundle.min.js"></script>
</body>
</html>
